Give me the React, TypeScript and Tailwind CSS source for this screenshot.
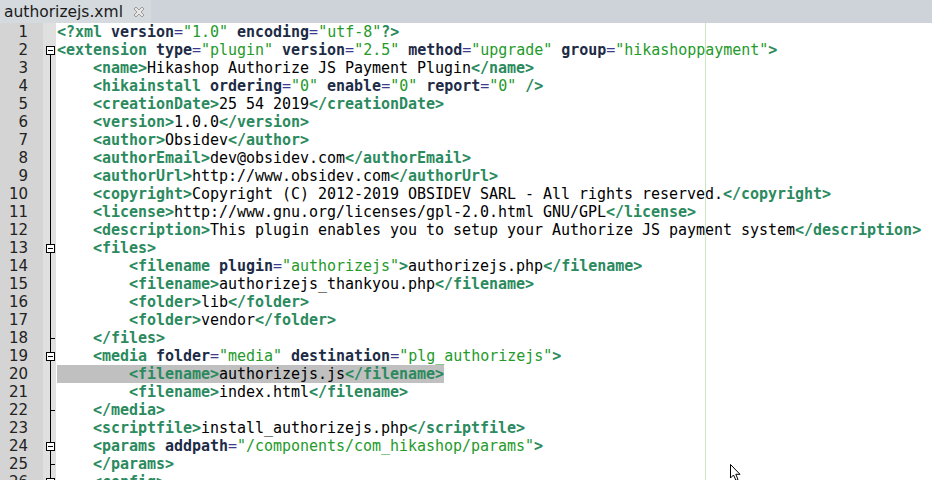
import React from "react";

type Tok = { t: string; k: "tag" | "attr" | "eq" | "val" | "text" };

function tokenize(s: string): Tok[] {
  const out: Tok[] = [];
  let i = 0;
  let inTag = false;
  let buf = "";
  const flush = () => {
    if (buf) out.push({ t: buf, k: "text" });
    buf = "";
  };
  while (i < s.length) {
    const c = s[i];
    if (!inTag) {
      if (c === "<") {
        flush();
        let j = i + 1;
        while (j < s.length && !/[\s>]/.test(s[j])) j++;
        out.push({ t: s.slice(i, j), k: "tag" });
        i = j;
        inTag = true;
      } else {
        buf += c;
        i++;
      }
    } else {
      if (c === " ") {
        buf += c;
        i++;
      } else if (s.startsWith("?>", i) || s.startsWith("/>", i)) {
        flush();
        out.push({ t: s.slice(i, i + 2), k: "tag" });
        i += 2;
        inTag = false;
      } else if (c === ">") {
        flush();
        out.push({ t: ">", k: "tag" });
        i++;
        inTag = false;
      } else if (c === "=") {
        flush();
        out.push({ t: "=", k: "eq" });
        i++;
      } else if (c === '"') {
        flush();
        const j = s.indexOf('"', i + 1);
        out.push({ t: s.slice(i, j + 1), k: "val" });
        i = j + 1;
      } else {
        flush();
        let j = i;
        while (j < s.length && /[\w:-]/.test(s[j])) j++;
        if (j === i) j = i + 1;
        out.push({ t: s.slice(i, j), k: "attr" });
        i = j;
      }
    }
  }
  flush();
  return out;
}

const cls: Record<Tok["k"], string> = {
  tag: "text-[#2b8a5e] font-bold",
  attr: "text-[#1d2b46] font-bold",
  eq: "text-[#3b3b8f]",
  val: "text-[#249a2a]",
  text: "text-black",
};

type Fold = "none" | "first" | "open" | "line" | "end";

const lines: { s: string; f: Fold }[] = [
  { s: '<?xml version="1.0" encoding="utf-8"?>', f: "none" },
  { s: '<extension type="plugin" version="2.5" method="upgrade" group="hikashoppayment">', f: "first" },
  { s: "    <name>Hikashop Authorize JS Payment Plugin</name>", f: "line" },
  { s: '    <hikainstall ordering="0" enable="0" report="0" />', f: "line" },
  { s: "    <creationDate>25 54 2019</creationDate>", f: "line" },
  { s: "    <version>1.0.0</version>", f: "line" },
  { s: "    <author>Obsidev</author>", f: "line" },
  { s: "    <authorEmail>dev@obsidev.com</authorEmail>", f: "line" },
  { s: "    <authorUrl>http://www.obsidev.com</authorUrl>", f: "line" },
  { s: "    <copyright>Copyright (C) 2012-2019 OBSIDEV SARL - All rights reserved.</copyright>", f: "line" },
  { s: "    <license>http://www.gnu.org/licenses/gpl-2.0.html GNU/GPL</license>", f: "line" },
  { s: "    <description>This plugin enables you to setup your Authorize JS payment system</description>", f: "line" },
  { s: "    <files>", f: "open" },
  { s: '        <filename plugin="authorizejs">authorizejs.php</filename>', f: "line" },
  { s: "        <filename>authorizejs_thankyou.php</filename>", f: "line" },
  { s: "        <folder>lib</folder>", f: "line" },
  { s: "        <folder>vendor</folder>", f: "line" },
  { s: "    </files>", f: "end" },
  { s: '    <media folder="media" destination="plg_authorizejs">', f: "open" },
  { s: "        <filename>authorizejs.js</filename>", f: "line" },
  { s: "        <filename>index.html</filename>", f: "line" },
  { s: "    </media>", f: "end" },
  { s: "    <scriptfile>install_authorizejs.php</scriptfile>", f: "line" },
  { s: '    <params addpath="/components/com_hikashop/params">', f: "open" },
  { s: "    </params>", f: "end" },
  { s: "    <config>", f: "open" },
];

function FoldMark({ f }: { f: Fold }) {
  if (f === "none") return <svg width="13" height="18" />;
  return (
    <svg width="13" height="18" viewBox="0 0 13 18" shapeRendering="crispEdges">
      {f === "first" && <line x1="7.5" y1="13" x2="7.5" y2="18" stroke="#000" />}
      {(f === "line" || f === "open") && <line x1="7.5" y1="0" x2="7.5" y2="18" stroke="#000" />}
      {f === "end" && (
        <>
          <line x1="7.5" y1="0" x2="7.5" y2="18" stroke="#000" />
          <line x1="7.5" y1="9.5" x2="12" y2="9.5" stroke="#000" />
        </>
      )}
      {(f === "first" || f === "open") && (
        <>
          <rect x="3.5" y="5.5" width="8" height="8" fill="#fff" stroke="#000" />
          <line x1="5" y1="9.5" x2="10" y2="9.5" stroke="#000" />
        </>
      )}
    </svg>
  );
}

function CodeLine({ s, hl }: { s: string; hl: boolean }) {
  const toks = tokenize(s);
  return (
    <span className={"inline-block h-[18px] whitespace-pre " + (hl ? "bg-[#c0c0c0]" : "")}>
      {toks.map((t, i) => (
        <span key={i} className={cls[t.k]}>
          {t.t}
        </span>
      ))}
    </span>
  );
}

export default function App() {
  return (
    <div className="relative w-[932px] h-[480px] overflow-hidden bg-white">
      {/* tab bar */}
      <div className="flex h-[23px] bg-[#cdd3d9]">
        <div className="flex items-center h-[23px] pl-[4px] pr-[5px] bg-[#d5dadf] gap-[9px]">
          <span className="text-[15.5px] leading-[22px] text-[#1a1a1a] font-['DejaVu_Sans',sans-serif]">
            authorizejs.xml
          </span>
          <svg width="14" height="14" viewBox="0 0 14 14">
            <path
              d="M2 4 L4 2 L7 5 L10 2 L12 4 L9 7 L12 10 L10 12 L7 9 L4 12 L2 10 L5 7 Z"
              fill="#e6e6e6"
              stroke="#9a9a9a"
              strokeWidth="1"
              strokeLinejoin="round"
            />
          </svg>
        </div>
      </div>
      {/* editor */}
      <div className="flex h-[457px]">
        <div className="w-[43px] bg-[#d4d4d4] flex flex-col">
          {lines.map((_, i) => (
            <div
              key={i}
              className="h-[18px] leading-[18px] text-right pr-[15px] text-[15px] text-[#222] font-['DejaVu_Sans',sans-serif]"
            >
              {i + 1}
            </div>
          ))}
        </div>
        <div className="w-[13px] bg-[#e0e0e0] flex flex-col">
          {lines.map((l, i) => (
            <div key={i} className="h-[18px] flex">
              <FoldMark f={l.f} />
            </div>
          ))}
        </div>
        <div className="relative flex-1 pl-[1px]">
          <div className="absolute top-0 bottom-0 left-[649px] w-px bg-[#cce6c4]" />
          <div className="flex flex-col font-['DejaVu_Sans_Mono',monospace] text-[15px] tracking-[-0.03px] leading-[18px]">
            {lines.map((l, i) => (
              <div key={i} className="h-[18px] leading-[18px]">
                <CodeLine s={l.s} hl={i === 19} />
              </div>
            ))}
          </div>
        </div>
      </div>
      {/* mouse pointer */}
      <svg className="absolute left-[729px] top-[463px]" width="14" height="20" viewBox="0 0 14 20">
        <path d="M1.5 1.5 L1.5 15 L4.5 12 L7 17.5 L9 16.5 L6.8 11.3 L11 11.3 Z" fill="#fff" stroke="#000" strokeWidth="1" />
      </svg>
    </div>
  );
}
